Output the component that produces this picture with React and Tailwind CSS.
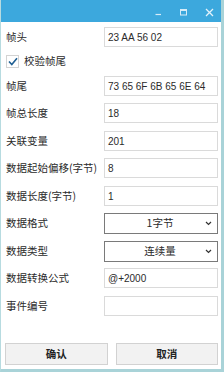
import React from "react";

const font = "font-['Noto_Sans_CJK_SC','Noto_Sans',sans-serif]";

function Row({ label, children, className = "" }) {
  return (
    <div className={`flex items-center h-[20px] ${className}`}>
      <div className="w-[99px] shrink-0 text-[10.5px] leading-none text-[#2b2b2b] pl-[1px]">{label}</div>
      {children}
    </div>
  );
}

function Input({ value }) {
  return (
    <div className="w-[115px] h-[20px] border border-[#dadada] bg-white flex items-center pl-[3px] text-[10px] text-[#2b2b2b] font-['Liberation_Sans','Noto_Sans',sans-serif]">
      {value}
    </div>
  );
}

function Select({ value }) {
  return (
    <div className="w-[115px] h-[21px] border border-[#7a7a7a] bg-white flex items-center text-[10.5px] text-[#2b2b2b]">
      <div className="flex-1 text-center pl-[10px]">{value}</div>
      <svg width="7" height="5" viewBox="0 0 7 5" className="mr-[5px]">
        <path d="M1 1 L3.5 3.5 L6 1" stroke="#333" strokeWidth="1.2" fill="none" />
      </svg>
    </div>
  );
}

export default function App() {
  return (
    <div className={`w-[224px] h-[372px] flex flex-col bg-white border-l border-l-[#b7dbe0] border-r-[3px] border-b-[3px] border-r-[#a9d3d8] border-b-[#a9d3d8] ${font}`}>
      <div className="h-[22px] shrink-0 bg-[#3ca8dd] flex items-start justify-end">
        <svg width="224" height="22" viewBox="0 0 224 22" className="-mr-[3px] -ml-[1px]">
          <line x1="155.5" y1="14.5" x2="161" y2="14.5" stroke="#d6ecf8" strokeWidth="1.2" />
          <rect x="180.5" y="9.5" width="6" height="5.5" stroke="#d6ecf8" strokeWidth="1" fill="none" />
          <line x1="180.5" y1="10.5" x2="186.5" y2="10.5" stroke="#d6ecf8" strokeWidth="1" />
          <path d="M206 9 L213 16 M213 9 L206 16" stroke="#e3f2fb" strokeWidth="1.3" />
        </svg>
      </div>
      <div className="flex-1 flex flex-col pl-[4px] pr-[3px]">
        <Row label="帧头" className="mt-[5px]"><Input value="23 AA 56 02" /></Row>
        <div className="h-[29px] flex items-center">
          <div className="w-[13px] h-[13px] border border-[#d3d3d3] flex items-center justify-center ml-[1px]">
            <svg width="10" height="9" viewBox="0 0 10 9">
              <path d="M1 4.5 L3.8 7.5 L9 1.2" stroke="#1f5f93" strokeWidth="1.6" fill="none" />
            </svg>
          </div>
          <span className="ml-[5px] text-[10.5px] text-[#2b2b2b] leading-none">校验帧尾</span>
        </div>
        <Row label="帧尾"><Input value="73 65 6F 6B 65 6E 64" /></Row>
        <Row label="帧总长度" className="mt-[7px]"><Input value="18" /></Row>
        <Row label="关联变量" className="mt-[8px]"><Input value="201" /></Row>
        <Row label="数据起始偏移(字节)" className="mt-[7px]"><Input value="8" /></Row>
        <Row label="数据长度(字节)" className="mt-[8px]"><Input value="1" /></Row>
        <Row label="数据格式" className="mt-[7px]"><Select value="1字节" /></Row>
        <Row label="数据类型" className="mt-[8px]"><Select value="连续量" /></Row>
        <Row label="数据转换公式" className="mt-[7px]"><Input value="@+2000" /></Row>
        <Row label="事件编号" className="mt-[8px]"><Input value="" /></Row>
        <div className="mt-auto mb-[4px] flex gap-[8px]">
          <button className="w-[103px] h-[22px] bg-[#f2f2f2] border border-[#d2d2d2] text-[10.5px] font-bold text-[#222]">确认</button>
          <button className="w-[103px] h-[22px] bg-[#f2f2f2] border border-[#d2d2d2] text-[10.5px] font-bold text-[#222]">取消</button>
        </div>
      </div>
    </div>
  );
}
